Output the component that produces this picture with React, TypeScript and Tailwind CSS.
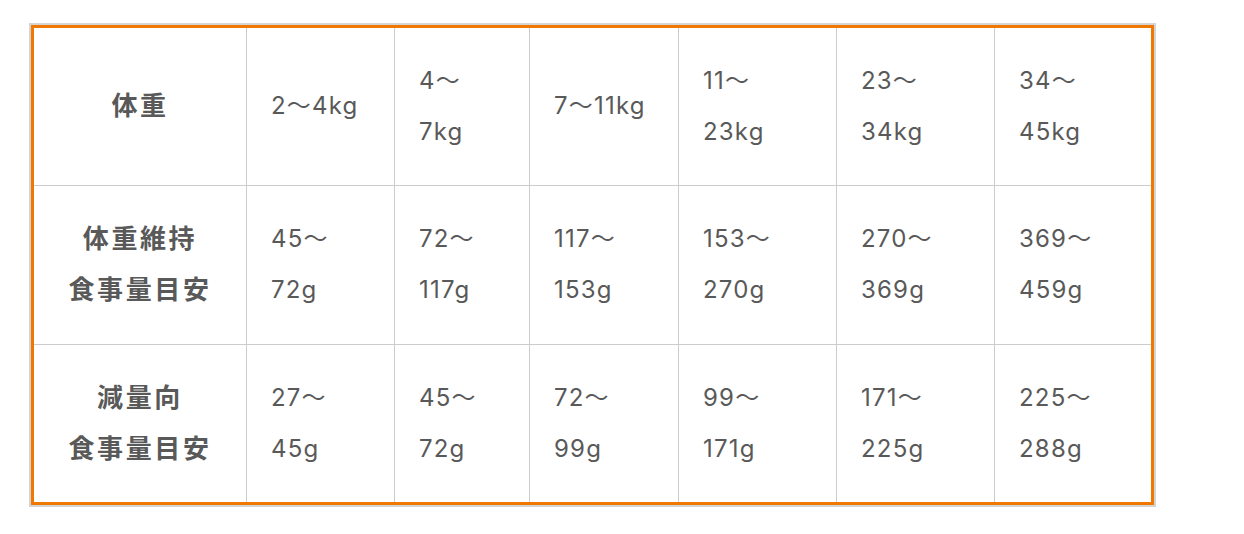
const rows = [
  {
    head: ['体重'],
    cells: [['2～4kg'], ['4～', '7kg'], ['7～11kg'], ['11～', '23kg'], ['23～', '34kg'], ['34～', '45kg']],
  },
  {
    head: ['体重維持', '食事量目安'],
    cells: [['45～', '72g'], ['72～', '117g'], ['117～', '153g'], ['153～', '270g'], ['270～', '369g'], ['369～', '459g']],
  },
  {
    head: ['減量向', '食事量目安'],
    cells: [['27～', '45g'], ['45～', '72g'], ['72～', '99g'], ['99～', '171g'], ['171～', '225g'], ['225～', '288g']],
  },
]

const colW = ['w-[214px]', 'w-[148px]', 'w-[135px]', 'w-[149px]', 'w-[158px]', 'w-[158px]', 'w-[158px]']

export default function App() {
  return (
    <div className="w-full h-[534px] bg-white pt-[23px] pl-[29px] font-['Noto_Sans_CJK_JP','Noto_Sans',sans-serif] text-[#595959]">
      <div className="w-fit border-2 border-[#d4d4d4]">
        <table className="border-collapse border-[3px] border-[#f07800] table-fixed">
          <tbody>
            {rows.map((r, i) => (
              <tr key={i} className="h-[159px]">
                <th
                  className={`${colW[0]} border border-[#cccccc] border-l-0 ${i === 0 ? 'border-t-0' : ''} ${i === 2 ? 'border-b-0' : ''} pb-[6px] text-center align-middle font-bold text-[26px] leading-[51px] tracking-[0.1em]`}
                >
                  {r.head.map((h) => (
                    <div key={h}>{h}</div>
                  ))}
                </th>
                {r.cells.map((c, j) => (
                  <td
                    key={j}
                    className={`${colW[j + 1]} border border-[#cccccc] ${j === 5 ? 'border-r-0' : ''} ${i === 0 ? 'border-t-0' : ''} ${i === 2 ? 'border-b-0' : ''} pl-[24px] pb-[2px] align-middle font-['Inter','Noto_Sans_CJK_JP',sans-serif] text-[24px] leading-[51px] tracking-[0.05em]`}
                  >
                    {c.map((t) => (
                      <div key={t}>{t}</div>
                    ))}
                  </td>
                ))}
              </tr>
            ))}
          </tbody>
        </table>
      </div>
    </div>
  )
}
